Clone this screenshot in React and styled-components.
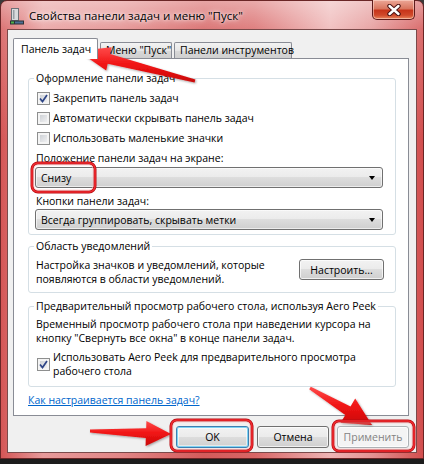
import React from 'react';
import styled, { createGlobalStyle } from 'styled-components';

const GlobalStyle = createGlobalStyle`
  html, body {
    margin: 0;
    padding: 0;
    background: #262626;
  }
  body {
    width: 424px;
    height: 464px;
    overflow: hidden;
    font-family: "Open Sans", "Noto Sans", sans-serif;
    font-size: 10.5px;
    color: #000;
  }
`;

const Screen = styled.div`
  position: relative;
  width: 424px;
  height: 464px;
  background: linear-gradient(#3a3a3a, #1c1c1c);
`;

const Window = styled.div`
  box-sizing: border-box;
  width: 424px;
  height: 459px;
  border: 1px solid #6a2626;
  border-radius: 7px 7px 0 0;
  display: flex;
  flex-direction: column;
  background:
    linear-gradient(180deg, rgba(255,255,255,.45) 0, rgba(255,255,255,.18) 28px, rgba(255,255,255,0) 140px),
    linear-gradient(90deg, #d45656 0%, #e79a9a 10%, #e28787 28%, #d45b5b 48%, #d86565 60%, #eeb4b4 78%, #e39292 88%, #d24e4e 100%);
`;

const TitleBar = styled.div`
  height: 28px;
  display: flex;
  align-items: flex-start;
  padding-left: 9px;
  padding-right: 8px;
`;

const TitleIcon = styled.svg`
  margin-top: 6px;
  flex: none;
`;

const TitleText = styled.div`
  margin-left: 5px;
  margin-top: 6px;
  font-size: 11.5px;
  line-height: 17px;
  color: #000;
  text-shadow: 0 0 6px rgba(255,255,255,.95), 0 0 3px rgba(255,255,255,.9);
`;

const CloseButton = styled.div`
  margin-left: auto;
  margin-top: -1px;
  box-sizing: border-box;
  width: 43px;
  height: 20px;
  border: 1px solid #5e1c1c;
  border-top: none;
  border-radius: 0 0 5px 5px;
  background: linear-gradient(#eca797 0%, #d9765f 45%, #c7351b 55%, #d0492b 80%, #e9875f 100%);
  box-shadow: inset 0 0 0 1px rgba(255,220,210,.55);
  display: flex;
  align-items: center;
  justify-content: center;
`;

const Client = styled.div`
  flex: 1;
  margin: 0 6px 5px 6px;
  border: 1px solid #7a4a4a;
  background: #f0f0f0;
  padding: 7px 7px 0 5px;
  display: flex;
  flex-direction: column;
`;

const TabRow = styled.div`
  display: flex;
  align-items: flex-end;
  gap: 2px;
  height: 21px;
`;

const Tab = styled.div`
  box-sizing: border-box;
  width: ${p => p.$w}px;
  height: ${p => (p.$active ? 21 : 16)}px;
  border: 1px solid #898c95;
  border-bottom: none;
  border-radius: 2px 2px 0 0;
  padding-left: ${p => (p.$active ? 7 : 5)}px;
  line-height: ${p => (p.$active ? 20 : 15)}px;
  white-space: nowrap;
  position: relative;
  z-index: ${p => (p.$active ? 1 : 0)};
  margin-bottom: ${p => (p.$active ? -1 : 0)}px;
  background: ${p => (p.$active ? '#fff' : 'linear-gradient(#f3f3f3, #e6e6e6 50%, #d9d9d9 51%, #cfcfcf)')};
`;

const Panel = styled.div`
  box-sizing: border-box;
  width: 396px;
  height: 358px;
  border: 1px solid #898c95;
  background: #fff;
  padding: 11px 12px 0 14px;
`;

const Group = styled.fieldset`
  margin: ${p => p.$mt || 0}px 0 0 0;
  padding: ${p => p.$pad};
  border: 1px solid #d5dfe5;
  border-radius: 3px;
  min-width: 0;
`;

const Legend = styled.legend`
  padding: 0 2px;
  margin-left: -2px;
  line-height: 16px;
`;

const CheckRow = styled.div`
  display: flex;
  align-items: center;
  gap: 3px;
  height: ${p => p.$h || 20}px;
  margin-top: ${p => p.$mt || 0}px;
  padding-left: 1px;
`;

const CheckBox = styled.span`
  box-sizing: border-box;
  flex: none;
  width: 13px;
  height: 13px;
  border: 1px solid #8e8f8f;
  background: linear-gradient(135deg, #c5c9cf, #f8f8f8);
  box-shadow: inset 0 0 0 2px #f4f4f4;
  display: flex;
  align-items: center;
  justify-content: center;
`;

const Label = styled.div`
  line-height: 16px;
  margin: ${p => p.$m};
`;

const Combo = styled.div`
  box-sizing: border-box;
  height: 21px;
  width: 348px;
  margin-left: -1px;
  border: 1px solid #707070;
  border-radius: 3px;
  background: linear-gradient(#f2f2f2 0%, #ebebeb 49%, #dddddd 50%, #cfcfcf 100%);
  box-shadow: inset 0 0 0 1px rgba(255,255,255,.6);
  display: flex;
  align-items: center;
  padding: 0 4px 0 5px;
`;

const ComboText = styled.span`
  flex: 1;
`;

const ComboArrow = styled.span`
  width: 0;
  height: 0;
  border-left: 3.5px solid transparent;
  border-right: 3.5px solid transparent;
  border-top: 4px solid #000;
  margin-right: 3px;
`;

const NotifyRow = styled.div`
  display: flex;
  justify-content: space-between;
  align-items: flex-start;
`;

const Text = styled.div`
  line-height: 14px;
  white-space: nowrap;
`;

const Button = styled.button`
  box-sizing: border-box;
  width: ${p => p.$w}px;
  height: ${p => p.$h || 22}px;
  margin-top: ${p => p.$mt || 0}px;
  padding: 0;
  font: 10.5px "Open Sans", "Noto Sans", sans-serif;
  color: ${p => (p.$disabled ? '#838383' : '#000')};
  border: 1px solid ${p => (p.$default ? '#3c7fb1' : p.$disabled ? '#adb2b5' : '#707070')};
  border-radius: 3px;
  background: ${p => (p.$disabled ? '#f4f4f4' : 'linear-gradient(#f2f2f2 0%, #ebebeb 49%, #dddddd 50%, #cfcfcf 100%)')};
  box-shadow: ${p => (p.$default ? 'inset 0 0 0 1px #7fd3f3, inset 0 0 0 2px rgba(255,255,255,.5)' : 'inset 0 0 0 1px rgba(255,255,255,.7)')};
`;

const Link = styled.a`
  display: block;
  margin-top: 6px;
  line-height: 14px;
  color: #0066cc;
  text-decoration: underline;
`;

const Footer = styled.div`
  display: flex;
  justify-content: flex-end;
  gap: 8px;
  width: 396px;
  margin-top: 10px;
`;

const Overlay = styled.svg`
  position: absolute;
  top: 0;
  left: 0;
  pointer-events: none;
`;

const Check = () => (
  <svg width="9" height="9" viewBox="0 0 9 9">
    <path d="M1 4.5 L3.5 7.5 L8 1" fill="none" stroke="#2d4486" strokeWidth="1.7" />
  </svg>
);

const CheckItem = ({ checked, children }) => (
  <CheckRow>
    <CheckBox>{checked && <Check />}</CheckBox>
    <div>{children}</div>
  </CheckRow>
);

const Frame = ({ x, y, w, h }) => (
  <g>
    <rect x={x} y={y} width={w} height={h} rx="6" fill="none" stroke="#b50d12" strokeWidth="3" />
    <rect x={x} y={y} width={w} height={h} rx="6" fill="none" stroke="#f02a2f" strokeWidth="1.6" />
    <rect x={x + 2} y={y + 2} width={w - 4} height={h - 4} rx="4" fill="none" stroke="rgba(255,190,190,.7)" strokeWidth="0.8" />
  </g>
);

export default function App() {
  return (
    <Screen>
      <GlobalStyle />
      <Window>
        <TitleBar>
          <TitleIcon width="14" height="18" viewBox="0 0 14 18">
            <rect x="1.5" y="1.5" width="7" height="12" fill="#d8dadc" stroke="#6d7177" />
            <rect x="3" y="3" width="1.5" height="9" fill="#9aa0a6" />
            <rect x="0" y="13.5" width="14" height="4" fill="#2b3136" />
            <rect x="1" y="14.5" width="3" height="2" fill="#4fb04a" />
            <rect x="5" y="14.5" width="8" height="2" fill="#4c6f94" />
          </TitleIcon>
          <TitleText>Свойства панели задач и меню "Пуск"</TitleText>
          <CloseButton>
            <svg width="14" height="12" viewBox="0 0 14 12">
              <path d="M2.5 2 L11.5 10 M11.5 2 L2.5 10" stroke="#4a1212" strokeWidth="4.4" strokeLinecap="round" />
              <path d="M2.5 2 L11.5 10 M11.5 2 L2.5 10" stroke="#fff" strokeWidth="2.4" strokeLinecap="round" />
            </svg>
          </CloseButton>
        </TitleBar>

        <Client>
          <TabRow>
            <Tab $active $w={85}>Панель задач</Tab>
            <Tab $w={72}>Меню "Пуск"</Tab>
            <Tab $w={118}>Панели инструментов</Tab>
          </TabRow>

          <Panel>
            <Group $pad="2px 11px 4px 7px">
              <Legend>Оформление панели задач</Legend>
              <CheckItem checked>Закрепить панель задач</CheckItem>
              <CheckItem>Автоматически скрывать панель задач</CheckItem>
              <CheckItem>Использовать маленькие значки</CheckItem>
              <Label $m="2px 0 1px">Положение панели задач на экране:</Label>
              <Combo>
                <ComboText>Снизу</ComboText>
                <ComboArrow />
              </Combo>
              <Label $m="5px 0 0">Кнопки панели задач:</Label>
              <Combo>
                <ComboText>Всегда группировать, скрывать метки</ComboText>
                <ComboArrow />
              </Combo>
            </Group>

            <Group $mt={3} $pad="4px 11px 6px 7px">
              <Legend>Область уведомлений</Legend>
              <NotifyRow>
                <Text>
                  Настройка значков и уведомлений, которые
                  <br />
                  появляются в области уведомлений.
                </Text>
                <Button $w={85} $h={21} $mt={1}>Настроить...</Button>
              </NotifyRow>
            </Group>

            <Group $mt={5} $pad="3px 11px 8px 7px">
              <Legend>Предварительный просмотр рабочего стола, используя Aero Peek</Legend>
              <Text>
                Временный просмотр рабочего стола при наведении курсора на
                <br />
                кнопку "Свернуть все окна" в конце панели задач.
              </Text>
              <CheckRow $h={28} $mt={5}>
                <CheckBox><Check /></CheckBox>
                <Text>
                  Использовать Aero Peek для предварительного просмотра
                  <br />
                  рабочего стола
                </Text>
              </CheckRow>
            </Group>

            <Link>Как настраивается панель задач?</Link>
          </Panel>

          <Footer>
            <Button $w={73} $default>OK</Button>
            <Button $w={72}>Отмена</Button>
            <Button $w={72} $disabled>Применить</Button>
          </Footer>
        </Client>
      </Window>

      <Overlay width="424" height="464" viewBox="0 0 424 464">
        <defs>
          <linearGradient id="arrowFill" x1="0" y1="0" x2="0" y2="1">
            <stop offset="0" stopColor="#ff4a4a" />
            <stop offset="0.5" stopColor="#f01414" />
            <stop offset="1" stopColor="#c80a0a" />
          </linearGradient>
          <filter id="shadow" x="-10%" y="-10%" width="130%" height="130%">
            <feDropShadow dx="1" dy="1" stdDeviation="0.8" floodColor="#000" floodOpacity="0.35" />
          </filter>
        </defs>
        <g fill="url(#arrowFill)" filter="url(#shadow)">
          <polygon points="78,51 111.6,47.3 110.1,54.1 195.4,79.5 194.6,82.5 107.7,63.7 106.2,70.5" />
          <polygon points="171,434 146.4,421 146.2,428.3 90,429.6 90,432.4 145.8,438.1 145.6,446" />
          <polygon points="372,425 355.2,398.5 350.5,406.4 310.8,386.7 309.2,389.3 345.3,415 340.6,422.8" />
        </g>
        <Frame x={32} y={163} w={63} h={29} />
        <Frame x={171} y={420} w={81} h={31} />
        <Frame x={333} y={421} w={81} h={30} />
      </Overlay>
    </Screen>
  );
}
